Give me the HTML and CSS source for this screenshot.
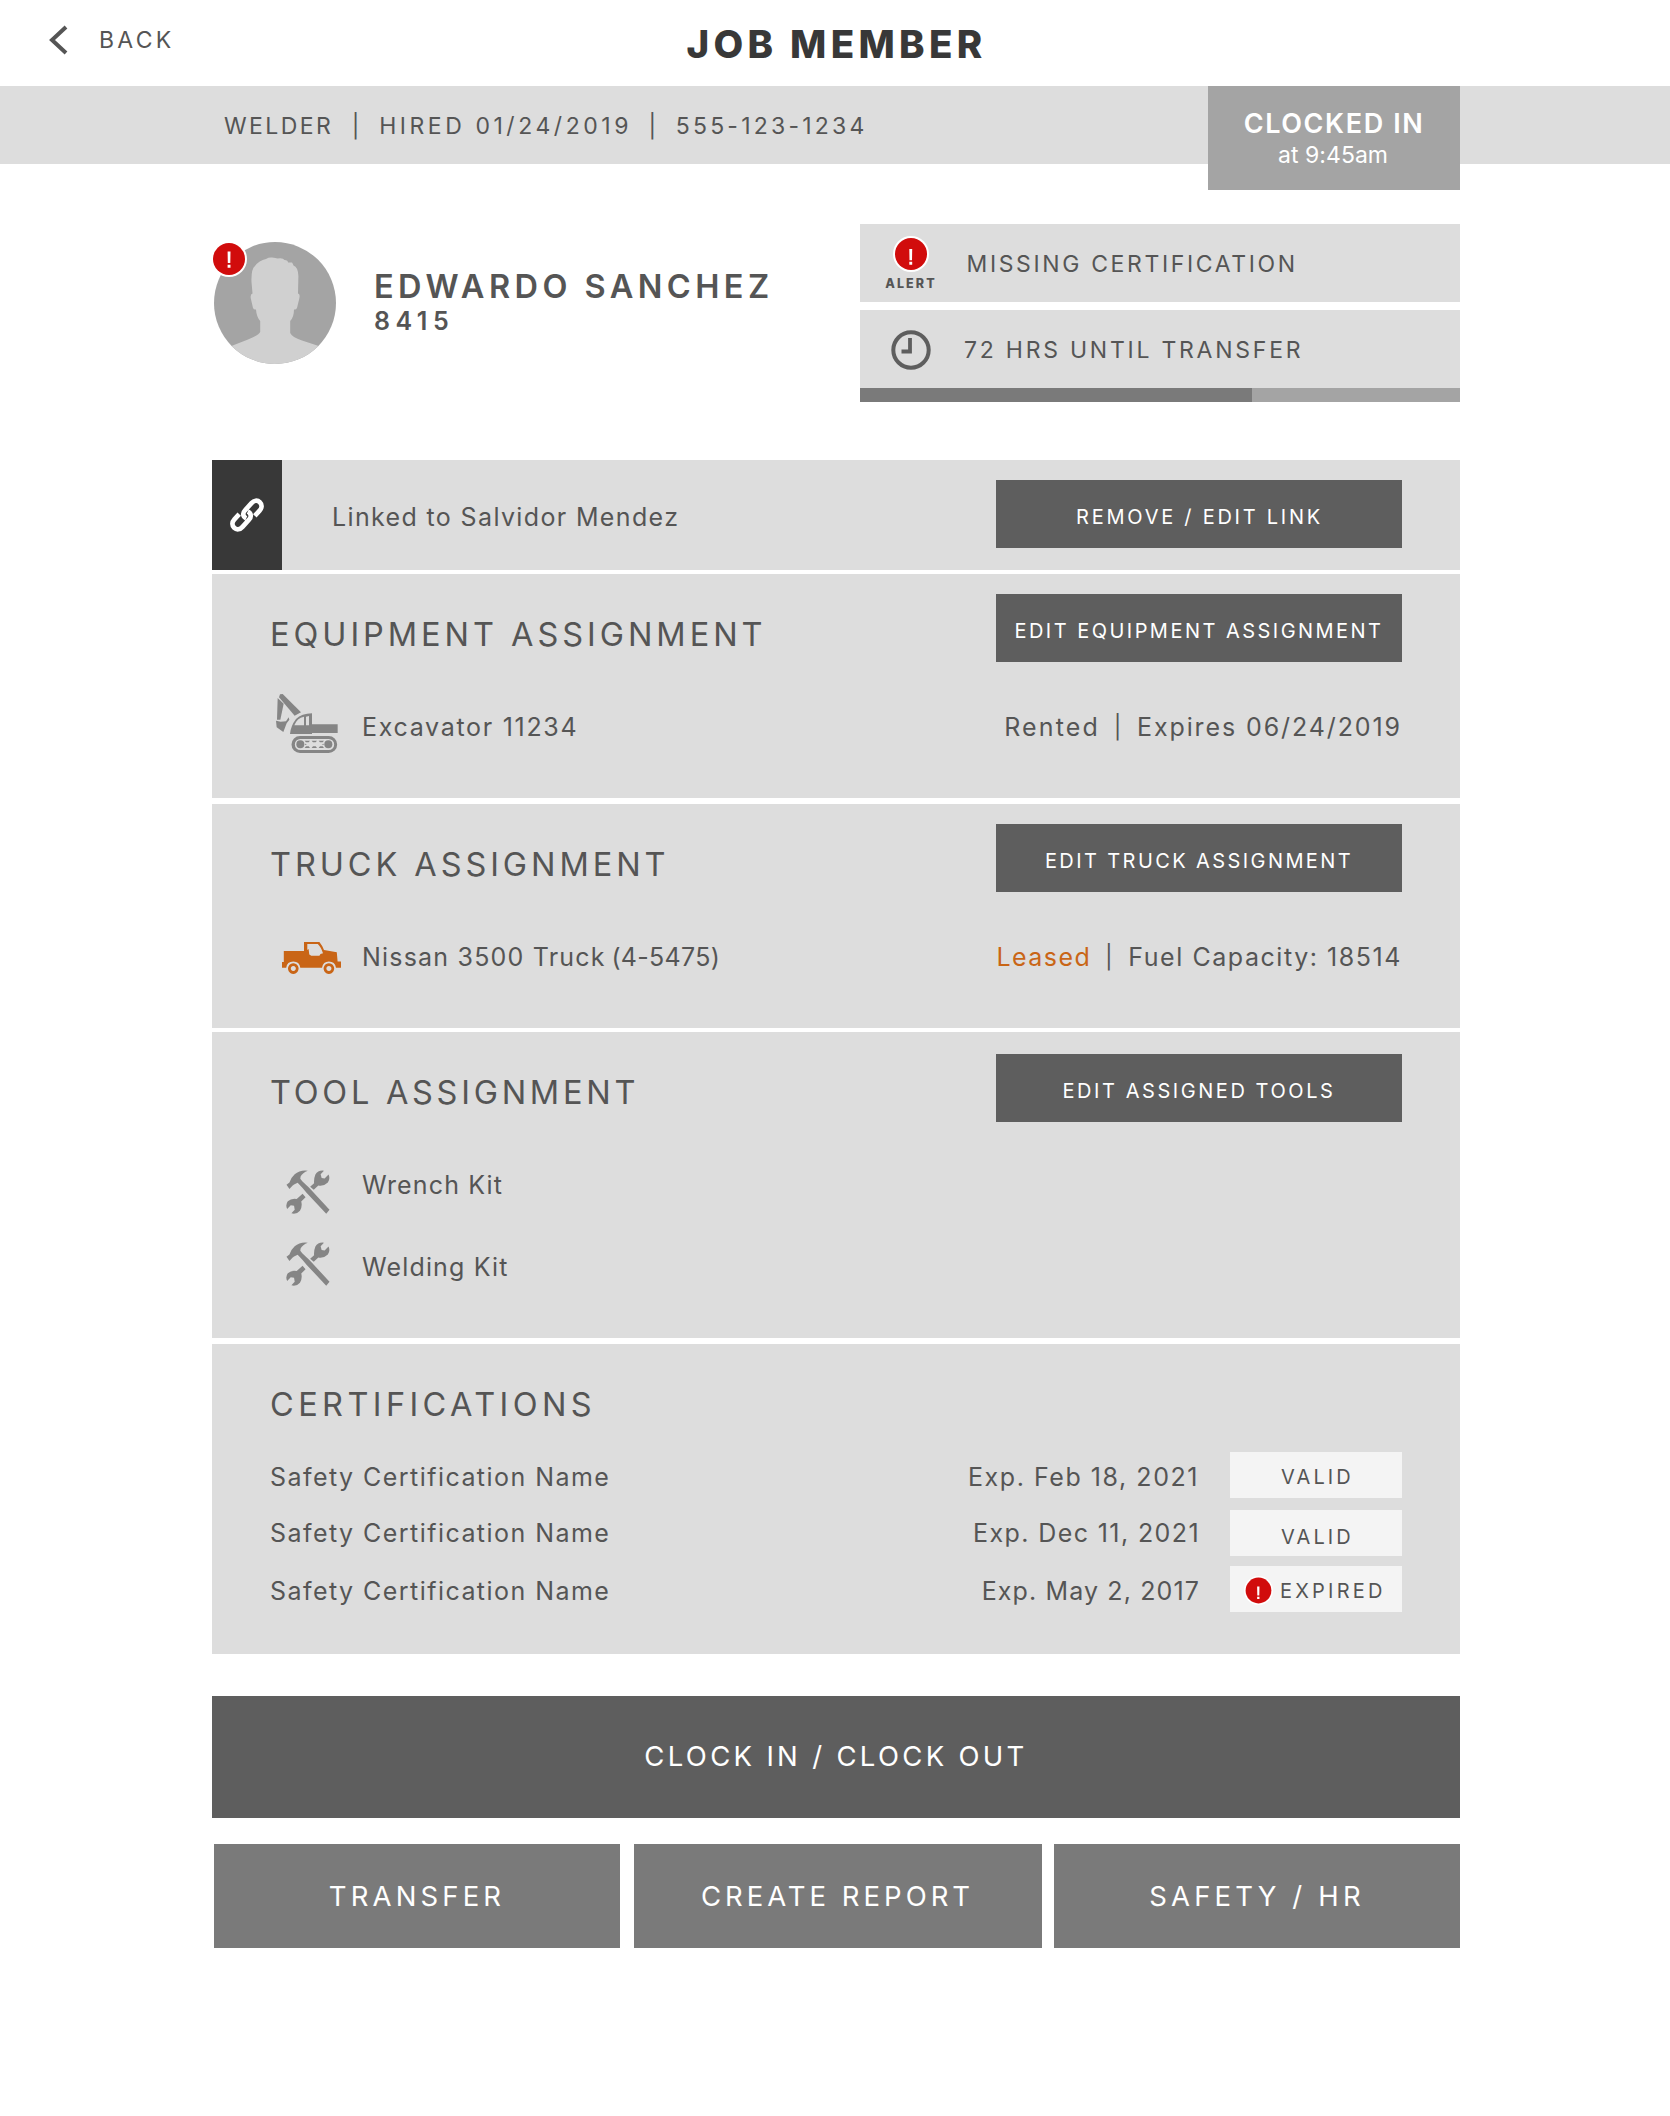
FILE: index.html
```html
<!DOCTYPE html>
<html lang="en">
<head>
<meta charset="utf-8">
<title>Job Member</title>
<link rel="stylesheet" href="styles.css">
</head>
<body>
<svg class="defs" aria-hidden="true">
  <symbol id="tools" viewBox="48 44 133 134">
    <path d="M49 89L58 82Q62 68 74 57Q90 43 114 46Q98 52 92 64L91 71L97 78L118 98L180 165L170 177L110 113L98 99L83 83L72 88L67 92L58 102Z"/>
    <path d="M121 95L133 84Q132 70 137 58Q145 44 163 46L153 57L156 68L165 70L177 58Q183 70 175 82Q163 94 146 91L132 104Z"/>
    <path d="M98 116L107 127L94 140Q98 155 90 168Q80 180 64 176L74 165L72 153L62 151L51 163Q45 150 53 139Q64 129 80 132Z"/>
  </symbol>
  <symbol id="warning" viewBox="0 0 36 36">
    <circle cx="18" cy="18" r="18" fill="#fff"/>
    <circle cx="18" cy="18" r="16" fill="#d10c0c"/>
    <path d="M16.600 10.500H19.500L19.300 22H16.800ZM16.600 23.700H19.500V26.700H16.600Z" fill="#fff"/>
  </symbol>
  <symbol id="warning-low" viewBox="0 0 36 36">
    <circle cx="18" cy="18" r="18" fill="#fff"/>
    <circle cx="18" cy="18" r="16" fill="#d10c0c"/>
    <path d="M16.300 13H19.200L19 24.200H16.500ZM16.300 25.700H19.200V28.700H16.300Z" fill="#fff"/>
  </symbol>
</svg>

<header class="topbar">
  <a class="back">
    <svg width="20" height="30" viewBox="0 0 20 30"><path d="M18 2L4 15L18 28" fill="none" stroke="#555" stroke-width="4"/></svg>
    <span>BACK</span>
  </a>
  <h1 class="title">JOB MEMBER</h1>
</header>

<div class="statusbar">
  <div class="facts">
    <span class="role">WELDER</span><span class="pipe">|</span><span class="hired">HIRED 01/24/2019</span><span class="pipe pipe-narrow">|</span><span class="phone">555-123-1234</span>
  </div>
  <div class="clocked">
    <strong>CLOCKED IN</strong>
    <span>at 9:45am</span>
  </div>
</div>

<main class="page">
  <section class="profile">
    <div class="avatar">
      <svg width="122" height="122" viewBox="0 0 122 122">
        <defs><clipPath id="round"><circle cx="61" cy="61" r="61"/></clipPath></defs>
        <circle cx="61" cy="61" r="61" fill="#a4a4a4"/>
        <path clip-path="url(#round)" fill="#d0d0d0" d="M58 15.6Q62 16 63.500 16.500Q69 15.500 70.500 18Q74 18 74 20.500L78 20.500Q79 22 79.500 23.500Q84 25 84.400 34L84 51.500Q86.500 52 85.200 57L83 66Q82 68 80 67.500Q80 75 76.200 79V91Q78 95 88 98.500L104 103.700V122H18V103.700L34 97.500Q45 93 46.200 90V79Q42.500 75 42 67.500Q40 68 39 66L36.700 56Q36.300 52 38.500 51.500L37.500 40Q37 27 41 24Q45 18.500 52 17Q55 15.200 58 15.600Z"/>
      </svg>
      <svg class="avatar-badge" width="36" height="36"><use href="#warning"/></svg>
    </div>
    <div class="identity">
      <h2>EDWARDO SANCHEZ</h2>
      <p>8415</p>
    </div>
    <div class="notices">
      <div class="notice">
        <div class="notice-icon">
          <svg width="36" height="36"><use href="#warning-low"/></svg>
          <b>ALERT</b>
        </div>
        <span class="missing">MISSING CERTIFICATION</span>
      </div>
      <div class="notice">
        <div class="notice-icon">
          <svg class="clock" width="40" height="40" viewBox="0 0 40 40" fill="none" stroke="#5e5e5e"><circle cx="20" cy="20" r="17.700" stroke-width="4"/><path d="M19 8V21.500H10.500" stroke-width="3.800"/></svg>
        </div>
        <span class="hours">72 HRS UNTIL TRANSFER</span>
      </div>
      <div class="progress"><div class="progress-fill" style="width:65.3%"></div></div>
    </div>
  </section>

  <section class="panel panel-link">
    <div class="link-tile">
      <svg width="34" height="34" viewBox="0 0 34 34" fill="none" stroke="#fff" stroke-width="4.700"><path d="M16.200 20.300C12.500 18.500 12.500 14.800 15 12.300L21.500 5.200C24 2.400 27.300 1.800 29.800 4.200S32 10 29.600 12.600L24.800 17.800M17.800 13.700C21.500 15.500 21.500 19.200 19 21.700L12.500 28.800C10 31.600 6.700 32.200 4.200 29.800S2 24 4.400 21.400L9.200 16.200"/></svg>
    </div>
    <span class="linked">Linked to Salvidor Mendez</span>
    <button class="edit edit-link">REMOVE / EDIT LINK</button>
  </section>

  <section class="panel panel-equipment">
    <div class="panel-head"><h3 class="h-equipment">EQUIPMENT ASSIGNMENT</h3><button class="edit">EDIT EQUIPMENT ASSIGNMENT</button></div>
    <div class="asset">
      <div class="asset-icon icon-excavator">
        <svg width="64" height="61" viewBox="45 39 192 183" fill="#858585">
          <path d="M60 43L68 42L123 97L104 107L57 52Z"/>
          <path d="M53 54L71 71L61 119H51Z"/>
          <path d="M48 122L62 125L78 124L86 112L88 119L80 130L70 156L50 142Z"/>
          <path fill-rule="evenodd" d="M90 162Q92 138 108 117Q125 101 156 100V133H233V159H156V162ZM103 136H132V110Q111 114 103 136ZM138 110V136H147V108Z"/>
          <path fill-rule="evenodd" d="M120 168H206A25.500 25.500 0 0 1 206 219H120A25.500 25.500 0 0 1 120 168ZM121 177A16.500 16.500 0 0 0 121 210H206A16.500 16.500 0 0 0 206 177Z"/>
          <circle cx="121" cy="193" r="12"/><circle cx="205" cy="193" r="12"/>
          <path d="M134 182H150L146 187H138ZM155 182H171L167 187H159ZM176 182H192L188 187H180ZM134 204H150L146 199H138ZM155 204H171L167 199H159ZM176 204H192L188 199H180ZM135 191L141 193L135 195ZM191 191L185 193L191 195Z"/>
        </svg>
      </div>
      <span class="excavator-name">Excavator 11234</span>
      <div class="asset-meta"><span class="rented">Rented</span><span class="pipe">|</span><span class="expires">Expires 06/24/2019</span></div>
    </div>
  </section>

  <section class="panel panel-truck">
    <div class="panel-head"><h3 class="h-truck">TRUCK ASSIGNMENT</h3><button class="edit edit-truck">EDIT TRUCK ASSIGNMENT</button></div>
    <div class="asset">
      <div class="asset-icon icon-truck">
        <svg width="59" height="32" viewBox="0 0 59 32" fill="#c96516">
          <path fill-rule="evenodd" d="M0 20H1.800V9H22V0H37.400Q40 3 42 8L54.800 10.300L55.600 19.500H59V25.700H54Q53 19.500 46.900 19.500Q41 19.500 40 25.700H18.300Q17.500 19.500 11.300 19.500Q5 19.500 4.200 25.700H0ZM25.300 2V8L26.600 7L27.300 12.500L29.300 13.800H37.400L38.500 12L41 11.300Q39 5 35.800 2Z"/>
          <path fill-rule="evenodd" d="M11.300 21.300A5.300 5.300 0 1 1 11.290 21.300ZM11.300 24.100A2.500 2.500 0 1 0 11.310 24.100ZM46.900 21.300A5.300 5.300 0 1 1 46.890 21.300ZM46.900 24.100A2.500 2.500 0 1 0 46.910 24.100Z"/>
        </svg>
      </div>
      <span class="truck-name">Nissan 3500 Truck <span class="unit">(4-5475)</span></span>
      <div class="asset-meta"><span class="leased">Leased</span><span class="pipe">|</span><span class="fuel">Fuel Capacity: 18514</span></div>
    </div>
  </section>

  <section class="panel panel-tool">
    <div class="panel-head"><h3 class="h-tool">TOOL ASSIGNMENT</h3><button class="edit edit-tools">EDIT ASSIGNED TOOLS</button></div>
    <div class="tool">
      <div class="asset-icon icon-tool"><svg width="44" height="44" fill="#858585"><use href="#tools"/></svg></div>
      <span>Wrench Kit</span>
    </div>
    <div class="tool">
      <div class="asset-icon icon-tool icon-tool-last"><svg width="44" height="44" fill="#858585"><use href="#tools"/></svg></div>
      <span>Welding Kit</span>
    </div>
  </section>

  <section class="panel panel-cert">
    <h3 class="h-cert">CERTIFICATIONS</h3>
    <div class="cert">
      <span class="cert-name">Safety Certification Name</span>
      <span class="cert-date date-feb">Exp. Feb 18, 2021</span>
      <span class="badge">VALID</span>
    </div>
    <div class="cert cert-second">
      <span class="cert-name">Safety Certification Name</span>
      <span class="cert-date date-dec">Exp. Dec 11, 2021</span>
      <span class="badge badge-low">VALID</span>
    </div>
    <div class="cert cert-third">
      <span class="cert-name">Safety Certification Name</span>
      <span class="cert-date date-may">Exp. May 2, 2017</span>
      <span class="badge badge-expired"><svg width="29" height="29"><use href="#warning-low"/></svg>EXPIRED</span>
    </div>
  </section>

  <button class="primary">CLOCK IN / CLOCK OUT</button>
  <div class="actions">
    <button>TRANSFER</button>
    <button>CREATE REPORT</button>
    <button>SAFETY / HR</button>
  </div>
</main>
</body>
</html>
```
FILE: styles.css
```css
* { box-sizing: border-box; }

body {
  margin: 0;
  background: #fff;
  color: #555;
  font: 400 25px/30px Inter, "Liberation Sans", sans-serif;
}

h1, h2, h3, p { margin: 0; }
svg { display: block; flex: none; }
.defs { position: absolute; width: 0; height: 0; }
span { white-space: nowrap; }

button {
  display: block;
  padding: 0;
  border: 0;
  border-radius: 0;
  color: #fff;
  font-family: inherit;
  white-space: nowrap;
}

/* Top bar */
.topbar {
  display: grid;
  grid-template-columns: 1fr auto 1fr;
  height: 86px;
}
.back {
  display: flex;
  align-items: center;
  gap: 31px;
  height: 30px;
  margin-top: 25px;
  padding-left: 48px;
  font-size: 23px;
  letter-spacing: 3.3px;
}
.title {
  margin-top: 20px;
  padding-left: 3px;
  color: #383838;
  font-size: 38.5px;
  font-weight: 800;
  line-height: 48px;
  letter-spacing: 4.3px;
}

/* Status bar */
.statusbar {
  display: flex;
  justify-content: space-between;
  height: 78px;
  padding: 0 210px 0 224px;
  background: #ddd;
}
.facts {
  display: flex;
  align-items: center;
  height: 80px;
  font-size: 23px;
}
.role { letter-spacing: 2.4px; }
.hired { letter-spacing: 3.55px; }
.phone { letter-spacing: 3.23px; }
.pipe {
  width: 46px;
  padding-right: 1px;
  font-size: 23px;
  text-align: center;
}
.pipe-narrow { width: 43.7px; padding-right: 3px; }
.clocked {
  width: 252px;
  height: 104px;
  padding-top: 22px;
  background: #a4a4a4;
  color: #fff;
  text-align: center;
}
.clocked strong, .clocked span { display: block; }
.clocked strong {
  font-size: 27px;
  font-weight: 600;
  line-height: 32px;
  letter-spacing: 1.6px;
}
.clocked span { padding-right: 2px; font-size: 23px; line-height: 31px; letter-spacing: .05px; }

/* Profile */
.page { width: 1248px; margin: 0 0 0 212px; }
.profile { display: flex; height: 178px; margin-top: 60px; }
.avatar { position: relative; margin: 18px 0 0 2px; }
.avatar-badge { position: absolute; left: -3px; top: -1px; }
.identity { flex: 1; margin: 43px 0 0 38px; }
.identity h2 {
  font-size: 32.5px;
  font-weight: 600;
  line-height: 40px;
  letter-spacing: 4.42px;
  white-space: nowrap;
}
.identity p { margin-top: -1px; font-weight: 600; letter-spacing: 5.5px; }
.notices { width: 600px; }
.notice {
  display: flex;
  align-items: center;
  height: 78px;
  margin-bottom: 8px;
  background: #ddd;
  font-size: 23px;
}
.notice + .notice { margin-bottom: 0; }
.notice-icon {
  display: flex;
  flex-direction: column;
  align-items: center;
  width: 102px;
}
.notice-icon b {
  margin-top: 4px;
  margin-bottom: -1px;
  font-size: 12.5px;
  font-weight: 800;
  line-height: 15px;
  letter-spacing: 2.1px;
}
.clock { margin: 1px 1px 0 0; }
.missing { margin: 2px 0 0 4.5px; letter-spacing: 2.63px; }
.hours { margin: 2px 0 0 2px; letter-spacing: 2.76px; }
.progress { height: 14px; background: #a4a4a4; }
.progress-fill { height: 14px; background: #7a7a7a; }

/* Panels */
.panel { padding: 20px 58px 0 58px; background: #ddd; }
.panel h3 {
  font-size: 32.5px;
  font-weight: 400;
  line-height: 40px;
  white-space: nowrap;
}
.panel-head { display: flex; justify-content: space-between; height: 68px; }
.panel-head h3 { margin-top: 21px; }
.h-equipment { letter-spacing: 3.95px; }
.h-truck { letter-spacing: 3.92px; }
.h-tool { letter-spacing: 3.73px; }
.h-cert { letter-spacing: 4.4px; }

.edit {
  width: 406px;
  height: 68px;
  padding-top: 5px;
  background: #5e5e5e;
  font-size: 20px;
  letter-spacing: 2.47px;
}
.edit-link { padding-left: 1px; letter-spacing: 2.75px; }
.edit-truck { letter-spacing: 2.41px; }
.edit-tools { margin-top: 2px; letter-spacing: 2.56px; }

.panel-link {
  display: flex;
  height: 110px;
  margin-top: 58px;
  padding: 0 58px 0 0;
}
.panel-link .edit { margin: 20px 0 0 auto; }
.link-tile {
  display: flex;
  align-items: center;
  justify-content: center;
  width: 70px;
  background: #383838;
}
.linked { margin: 42px 0 0 50px; letter-spacing: 1.36px; }

.panel-equipment { height: 224px; margin-top: 4px; }
.panel-truck { height: 224px; margin-top: 6px; }
.asset { display: flex; align-items: center; height: 60px; margin-top: 35px; }
.asset-icon { flex: none; width: 92px; }
.icon-excavator { padding-left: 5px; margin-top: -7px; }
.icon-truck { padding-left: 12px; margin-top: 2px; }
.excavator-name { letter-spacing: 1.7px; }
.truck-name { letter-spacing: 1.2px; }
.unit { margin-left: -2.5px; letter-spacing: .3px; }
.asset-meta { display: flex; margin: 0 0 0 auto; }
.asset-meta .pipe { width: 37px; padding-right: 2px; }
.rented { letter-spacing: 2.15px; }
.expires { letter-spacing: 1.9px; }
.leased { color: #c96516; letter-spacing: 1.45px; }
.fuel { letter-spacing: 1.55px; }

.panel-tool { height: 306px; margin-top: 4px; }
.tool { display: flex; align-items: center; height: 82px; letter-spacing: 1.15px; }
.panel-head + .tool { margin-top: 24px; }
.icon-tool { width: 92px; padding-left: 16px; margin-top: 14px; }
.icon-tool-last { margin-top: -6px; }

/* Certifications */
.panel-cert { height: 310px; margin-top: 6px; padding-top: 41px; }
.h-cert { margin-bottom: 27px; }
.cert { display: flex; height: 46px; line-height: 50px; }
.cert-second { margin-top: 12px; line-height: 46px; }
.cert-third { margin-top: 10px; }
.cert-name { letter-spacing: 1.45px; }
.cert-date { margin: 0 30px 0 auto; }
.date-feb { padding-right: 1px; letter-spacing: 1.55px; }
.date-dec { letter-spacing: 1.4px; }
.date-may { letter-spacing: 1.12px; }
.badge {
  width: 172px;
  height: 46px;
  padding-left: 51px;
  background: #f4f4f4;
  font-size: 20px;
  line-height: 50px;
  letter-spacing: 3.1px;
}
.badge-low { line-height: 54px; }
.badge-expired { display: flex; gap: 7px; padding-left: 14px; letter-spacing: 3.21px; }
.badge-expired svg { margin-top: 10px; }

/* Actions */
.primary {
  width: 100%;
  height: 122px;
  margin-top: 42px;
  padding-bottom: 2px;
  background: #5e5e5e;
  font-size: 27.5px;
  letter-spacing: 3.31px;
}
.actions {
  display: grid;
  grid-template-columns: 420px 420px 406px;
  margin-top: 26px;
  padding-left: 2px;
}
.actions button {
  height: 104px;
  margin-right: 14px;
  background: #7a7a7a;
  font-size: 27.5px;
  letter-spacing: 4.15px;
}
.actions button:nth-child(2) { margin-right: 12px; padding-right: 1px; letter-spacing: 4px; }
.actions button:last-child { margin-right: 0; }
```
